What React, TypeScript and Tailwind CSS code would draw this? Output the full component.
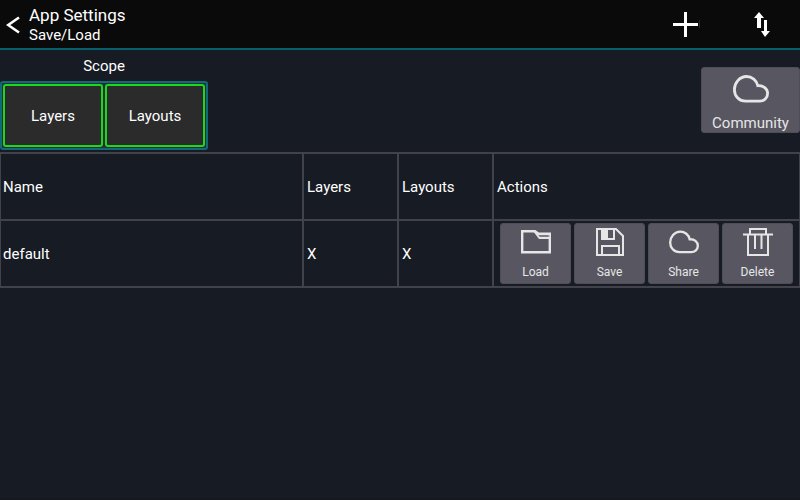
import { useState, type ReactNode } from "react";

function BackIcon() {
  return (
    <svg width="14" height="18" viewBox="0 0 14 18" fill="none" stroke="#fff" strokeWidth="2.6" aria-hidden="true">
      <path d="M13 1.500 2.200 9 13 16.500" />
    </svg>
  );
}

function PlusIcon() {
  return (
    <svg width="28" height="26" viewBox="0 0 28 26" aria-hidden="true">
      <path d="M1 11h11V0h3v11h11v3H15v11h-3V14H1z" fill="#fff" />
      <path d="M27 8h1v8h-1z" fill="#2b2b2b" />
    </svg>
  );
}

function SwapIcon() {
  return (
    <svg width="16" height="26" viewBox="0 0 16 26" fill="#fff" aria-hidden="true">
      <path d="M5 0 10 6H7v10H3V6H0z" />
      <path d="M11 25 16 19h-3V8h-3v11H7z" />
    </svg>
  );
}

function CloudIcon({ className }: { className: string }) {
  return (
    <svg className={className} viewBox="0 0 36 28" fill="none" stroke="#e6e6e6" strokeWidth="2.8" aria-hidden="true">
      <path d="M12.500 26.200C6 26.200 1.400 21 1.400 14.500S6.500 1.500 13.500 1.500c5.500 0 10.200 3.800 11.300 9.200 5.500-.4 9.800 3 9.800 7.800 0 4.400-3.500 7.700-8 7.700z" />
    </svg>
  );
}

function FolderIcon() {
  return (
    <svg width="30" height="28" viewBox="0 0 30 28" fill="none" stroke="#e6e6e6" aria-hidden="true">
      <path d="M1.200 3.200h12.800l3.500 2.500h11.300v18.600H1.200z" strokeWidth="2.400" />
      <path d="M13.500 3.500l5 6.500h10.500" strokeWidth="2" />
      <path d="M18 8h11" strokeWidth="1" stroke="#a5a4aa" />
    </svg>
  );
}

function FloppyIcon() {
  return (
    <svg width="28" height="28" viewBox="0 0 28 28" fill="none" stroke="#e6e6e6" strokeWidth="2" aria-hidden="true">
      <path d="M1 1h19l7 7v19H1z" />
      <path d="M6 1v10h12V1" />
      <path d="M5 1h7v10H5z" fill="#e6e6e6" stroke="none" />
      <path d="M6 27V18h17v9" />
    </svg>
  );
}

function TrashIcon() {
  return (
    <svg width="30" height="28" viewBox="0 0 30 28" fill="none" stroke="#e6e6e6" strokeWidth="2" aria-hidden="true">
      <path d="M0 6.500h30" />
      <path d="M7 6V1h16v5" />
      <path d="M5 7v20h20V7" />
      <path d="M12 7v14M18.500 7v14" />
    </svg>
  );
}

function ActionButton({ label, children }: { label: string; children: ReactNode }) {
  return (
    <button
      type="button"
      className="flex h-[61px] w-[71px] flex-col items-center rounded-[3px] border border-[#4e4d58] bg-[#585661] pt-1 text-xs leading-4 text-[#e6e6e6]"
    >
      <span className="flex h-7 items-center">{children}</span>
      <span className="mt-2">{label}</span>
    </button>
  );
}

function ScopeToggle({ label }: { label: string }) {
  const [on, setOn] = useState(true);
  return (
    <button
      type="button"
      aria-pressed={on}
      onClick={() => setOn(!on)}
      className={`h-[63px] w-[100px] rounded-[3px] border-2 bg-[#2b2b2b] ${on ? "border-[#16dc1c]" : "border-[#4e4d58]"}`}
    >
      {label}
    </button>
  );
}

const cell = "border-b-2 border-r-2 border-[#42424b] px-[3px] py-0 text-left font-normal last:border-r first:pl-0.5";

export default function App() {
  return (
    <div className="flex min-h-screen flex-col border-b-2 border-[#17181c] bg-[#171b23] font-['Roboto','Liberation_Sans',sans-serif] text-[15px] leading-5 text-white">
      <header className="flex h-[50px] items-center border-b-2 border-[#08606c] bg-[#0a0a0a] pl-1.5 pt-px">
        <button type="button" aria-label="Back" className="flex items-center pr-[9px]">
          <BackIcon />
        </button>
        <div className="flex-1">
          <h1 className="text-[17px] leading-[18px]">App Settings</h1>
          <p className="mt-0.5 leading-[18px]">Save/Load</p>
        </div>
        <button type="button" aria-label="Add" className="flex w-[76px] justify-center">
          <PlusIcon />
        </button>
        <button type="button" aria-label="Import or export" className="flex w-[76px] justify-center">
          <SwapIcon />
        </button>
      </header>

      <main>
        <section className="flex items-center justify-between pb-0.5">
          <div role="group" aria-labelledby="scope-label">
            <h2 id="scope-label" className="pb-1 pt-1.5 text-center leading-[21px]">
              Scope
            </h2>
            <div className="flex gap-0.5 rounded-[3px] border-2 border-[#126a78] bg-[#2a2d38] p-px">
              <ScopeToggle label="Layers" />
              <ScopeToggle label="Layouts" />
            </div>
          </div>
          <button
            type="button"
            className="flex h-[66px] w-[99px] flex-col items-center rounded-[3px] border border-[#4e4d58] bg-[#585661] pt-[7px] leading-4 text-[#e6e6e6]"
          >
            <CloudIcon className="h-7 w-9 shrink-0" />
            <span className="mt-3">Community</span>
          </button>
        </section>

        <table className="w-full table-fixed border-separate border-spacing-0 border-l border-t-2 border-[#42424b]">
          <colgroup>
            <col />
            <col className="w-[95px]" />
            <col className="w-[95px]" />
            <col className="w-[306px]" />
          </colgroup>
          <thead>
            <tr className="h-[67px]">
              <th scope="col" className={cell}>Name</th>
              <th scope="col" className={cell}>Layers</th>
              <th scope="col" className={cell}>Layouts</th>
              <th scope="col" className={cell}>Actions</th>
            </tr>
          </thead>
          <tbody>
            <tr className="h-[67px]">
              <td className={cell}>default</td>
              <td className={cell}>X</td>
              <td className={cell}>X</td>
              <td className={cell}>
                <div className="flex justify-center gap-[3px]">
                  <ActionButton label="Load"><FolderIcon /></ActionButton>
                  <ActionButton label="Save"><FloppyIcon /></ActionButton>
                  <ActionButton label="Share"><CloudIcon className="h-6 w-[30px]" /></ActionButton>
                  <ActionButton label="Delete"><TrashIcon /></ActionButton>
                </div>
              </td>
            </tr>
          </tbody>
        </table>
      </main>
    </div>
  );
}
